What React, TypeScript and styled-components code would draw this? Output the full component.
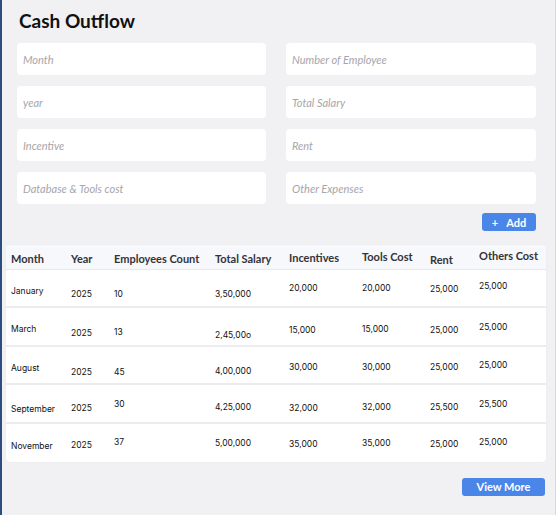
import React from "react";
import styled, { createGlobalStyle } from "styled-components";

const GlobalStyle = createGlobalStyle`
    body {
        margin: 0;
        background: #f1f1f3;
        font-family: "Lato", "Liberation Sans", sans-serif;
    }
`;

type Cell = { text: string; top: number };

const fields = [
    "Month",
    "Number of Employee",
    "year",
    "Total Salary",
    "Incentive",
    "Rent",
    "Database & Tools cost",
    "Other Expenses",
];

// header labels with their small vertical drift (px)
const headers: [string, number][] = [
    ["Month", 1],
    ["Year", 1],
    ["Employees Count", 1],
    ["Total Salary", 1],
    ["Incentives", 0],
    ["Tools Cost", -1],
    ["Rent", 2],
    ["Others Cost", -2],
];

const raw: [string[], number[]][] = [
    [
        ["January", "2025", "10", "3,50,000", "20,000", "20,000", "25,000", "25,000"],
        [15, 18, 18, 18, 12, 12, 13, 10],
    ],
    [
        ["March", "2025", "13", "2,45,00o", "15,000", "15,000", "25,000", "25,000"],
        [15, 19, 18, 21, 16, 15, 16, 13],
    ],
    [
        ["August", "2025", "45", "4,00,000", "30,000", "30,000", "25,000", "25,000"],
        [15, 19, 19, 18, 14, 14, 14, 12],
    ],
    [
        ["September", "2025", "30", "4,25,000", "32,000", "32,000", "25,500", "25,500"],
        [18, 17, 13, 16, 17, 16, 16, 13],
    ],
    [
        ["November", "2025", "37", "5,00,000", "35,000", "35,000", "25,000", "25,000"],
        [16, 15, 12, 13, 14, 13, 14, 12],
    ],
];

const rows: Cell[][] = raw.map(([texts, tops]) =>
    texts.map((text, i) => ({ text, top: tops[i] }))
);

const CashOutflow: React.FC = () => {
    return (
        <Page>
            <GlobalStyle />
            <Title>Cash Outflow</Title>
            <FormGrid>
                {fields.map((f) => (
                    <Field key={f} placeholder={f} />
                ))}
            </FormGrid>
            <ActionRow>
                <BlueButton $w={54}>
                    <span className="plus">+</span>Add
                </BlueButton>
            </ActionRow>
            <Table>
                <HeaderRow>
                    {headers.map(([h, dy]) => (
                        <HeadCell key={h} $dy={dy}>
                            {h}
                        </HeadCell>
                    ))}
                </HeaderRow>
                {rows.map((row, r) => (
                    <BodyRow key={r}>
                        {row.map((c, i) => (
                            <BodyCell key={i} $top={c.top}>
                                {c.text}
                            </BodyCell>
                        ))}
                    </BodyRow>
                ))}
            </Table>
            <FooterRow>
                <BlueButton $w={83}>View More</BlueButton>
            </FooterRow>
        </Page>
    );
};

const columns = "60px 43px 101px 74px 73px 68px 49px 67px";

const Page = styled.div`
    box-sizing: border-box;
    min-height: 100vh;
    border-left: 2px solid #2d4d80;
    border-right: 1px solid #dadade;
    background: #f1f1f3;
    overflow: hidden;
`;

const Title = styled.h1`
    margin: 0;
    padding: 9px 0 0 17px;
    font-size: 19px;
    line-height: 23px;
    font-weight: 700;
    color: #111;
`;

const FormGrid = styled.div`
    display: grid;
    grid-template-columns: 249px 250px;
    column-gap: 20px;
    row-gap: 11px;
    margin: 11px 0 0 15px;
`;

const Field = styled.input`
    box-sizing: border-box;
    height: 32px;
    border: none;
    border-radius: 4px;
    background: #fff;
    padding: 0 6px;
    font-family: "Lato", sans-serif;
    font-size: 11px;
    font-style: italic;
    outline: none;

    &::placeholder {
        color: #a6a6aa;
    }
`;

const ActionRow = styled.div`
    display: flex;
    justify-content: flex-end;
    padding-right: 19px;
    margin-top: 9px;
`;

const BlueButton = styled.button<{ $w: number }>`
    width: ${(p) => p.$w}px;
    height: 18px;
    border: none;
    border-radius: 3px;
    background: #4a86e8;
    color: #fff;
    font-family: "Lato", sans-serif;
    font-size: 11px;
    font-weight: 700;
    padding: 0;
    display: flex;
    align-items: center;
    justify-content: center;

    .plus {
        margin-right: 8px;
        font-size: 11px;
    }
`;

const Table = styled.div`
    margin: 14px 9px 0 4px;
    background: #fff;
    border-radius: 4px;
    box-shadow: 0 0 2px rgba(0, 0, 0, 0.06);
    overflow: hidden;
`;

const HeaderRow = styled.div`
    display: grid;
    grid-template-columns: ${columns};
    align-items: center;
    height: 24px;
    padding-left: 5px;
    background: #f7f8fc;
    border-bottom: 1px solid #e6e7ef;
`;

const HeadCell = styled.div<{ $dy: number }>`
    margin-top: ${(p) => p.$dy * 2}px;
    font-size: 11px;
    font-weight: 700;
    color: #333338;
    white-space: nowrap;
`;

const BodyRow = styled.div`
    box-sizing: border-box;
    display: grid;
    grid-template-columns: ${columns};
    align-items: start;
    height: 38.4px;
    padding-left: 5px;
    border-bottom: 2px solid #ebebf0;

    &:last-child {
        border-bottom: none;
    }
`;

const BodyCell = styled.div<{ $top: number }>`
    padding-top: ${(p) => p.$top}px;
    font-family: "Inter", "Liberation Sans", sans-serif;
    font-size: 8.5px;
    line-height: 12px;
    color: #111;
    white-space: nowrap;
`;

const FooterRow = styled.div`
    display: flex;
    justify-content: flex-end;
    padding-right: 10px;
    margin-top: 16px;
`;

export default CashOutflow;
